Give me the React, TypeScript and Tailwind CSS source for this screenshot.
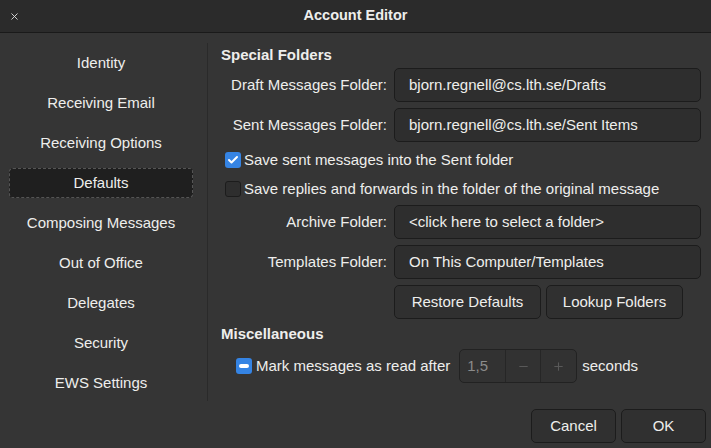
import { Check, Minus, Plus, X } from 'lucide-react'

const NAV = [
    'Identity',
    'Receiving Email',
    'Receiving Options',
    'Defaults',
    'Composing Messages',
    'Out of Office',
    'Delegates',
    'Security',
    'EWS Settings'
]

const FONT = { fontFamily: '"Liberation Sans", Arial, sans-serif' }

function Field({ label, value }: { label: string; value: string }) {
    return (
        <div className="flex items-center h-[34px]">
            <div className="w-[166px] text-right">{label}</div>
            <div className="ml-[7px] flex-1 h-full flex items-center px-[14px] bg-[#2e2e2e] border border-[#1c1c1c] rounded-[5px]">
                {value}
            </div>
        </div>
    )
}

function Btn({ children, className }: { children: React.ReactNode; className?: string }) {
    return (
        <div
            className={[
                'h-[34px] flex items-center justify-center bg-[#303030] border border-[#1c1c1c] rounded-[5px]',
                className ?? ''
            ].join(' ')}>
            {children}
        </div>
    )
}

export default function App() {
    return (
        <div
            style={FONT}
            className="w-[711px] h-[448px] bg-[#353535] text-[#eeeeec] text-[15px] flex flex-col overflow-hidden">
            {/* header bar */}
            <div className="h-[33px] bg-[#2b2b2b] border-b border-[#1a1a1a] flex items-center relative shrink-0">
                <X
                    size={11}
                    strokeWidth={2}
                    className="ml-[9px] text-[#dcdcdc]"
                />
                <div className="absolute inset-0 flex items-center justify-center font-bold text-[14.5px]">
                    Account Editor
                </div>
            </div>

            <div className="flex flex-1">
                {/* sidebar */}
                <div className="w-[208px] shrink-0 pt-[10px]">
                    <div className="border-r border-[#2a2a2a] h-[358px] pl-[9px] pr-[14px]">
                        {NAV.map(n => (
                            <div
                                key={n}
                                className="h-10 flex items-center">
                                {n === 'Defaults' ? (
                                    <div className="w-[184px] h-[30px] flex items-center justify-center bg-[#1f1f1f] rounded-[4px] border border-dashed border-[#555]">
                                        {n}
                                    </div>
                                ) : (
                                    <div className="w-[184px] text-center">{n}</div>
                                )}
                            </div>
                        ))}
                    </div>
                </div>

                {/* content */}
                <div className="flex-1 pl-[13px] pr-[10px] pt-[12px] flex flex-col">
                    <div className="font-bold h-[20px] leading-[20px]">Special Folders</div>
                    <div className="mt-[3px] flex flex-col gap-[6px]">
                        <Field
                            label="Draft Messages Folder:"
                            value="bjorn.regnell@cs.lth.se/Drafts"
                        />
                        <Field
                            label="Sent Messages Folder:"
                            value="bjorn.regnell@cs.lth.se/Sent Items"
                        />
                    </div>
                    <div className="mt-[10px] flex flex-col gap-[13px] pl-[4px]">
                        <div className="flex items-center gap-[3px] h-[16px]">
                            <div className="w-4 h-4 rounded-[3px] bg-[#3584e4] flex items-center justify-center">
                                <Check
                                    size={12}
                                    strokeWidth={4}
                                    className="text-white"
                                />
                            </div>
                            <span>Save sent messages into the Sent folder</span>
                        </div>
                        <div className="flex items-center gap-[3px] h-[16px]">
                            <div className="w-4 h-4 rounded-[3px] bg-[#2e2e2e] border border-[#1c1c1c]" />
                            <span>Save replies and forwards in the folder of the original message</span>
                        </div>
                    </div>
                    <div className="mt-[8px] flex flex-col gap-[6px]">
                        <Field
                            label="Archive Folder:"
                            value="<click here to select a folder>"
                        />
                        <Field
                            label="Templates Folder:"
                            value="On This Computer/Templates"
                        />
                        <div className="flex gap-[5px] pl-[173px]">
                            <Btn className="w-[147px]">Restore Defaults</Btn>
                            <Btn className="w-[137px]">Lookup Folders</Btn>
                        </div>
                    </div>
                    <div className="mt-[5px] font-bold h-[20px] leading-[20px]">Miscellaneous</div>
                    <div className="mt-[5px] flex items-center h-[34px] pl-[15px]">
                        <div className="w-4 h-4 rounded-[3px] bg-[#3584e4] flex items-center justify-center">
                            <div className="w-[10px] h-[4px] bg-white rounded-[2px]" />
                        </div>
                        <span className="ml-[4px]">Mark messages as read after</span>
                        <div className="ml-[9px] h-[34px] w-[118px] flex border border-[#222] rounded-[5px] bg-[#323232] text-[#8b8b8b]">
                            <div className="w-[46px] flex items-center pl-[7px] border-r border-[#262626]">1,5</div>
                            <div className="w-[35px] flex items-center justify-center border-r border-[#262626]">
                                <Minus
                                    size={13}
                                    strokeWidth={2}
                                    className="text-[#595959]"
                                />
                            </div>
                            <div className="flex-1 flex items-center justify-center">
                                <Plus
                                    size={13}
                                    strokeWidth={2}
                                    className="text-[#595959]"
                                />
                            </div>
                        </div>
                        <span className="ml-[5px]">seconds</span>
                    </div>
                </div>
            </div>

            {/* footer buttons */}
            <div className="flex justify-end gap-[5px] pr-[5px] pb-[5px] -mt-[39px]">
                <Btn className="w-[85px]">Cancel</Btn>
                <Btn className="w-[85px]">OK</Btn>
            </div>
        </div>
    )
}
